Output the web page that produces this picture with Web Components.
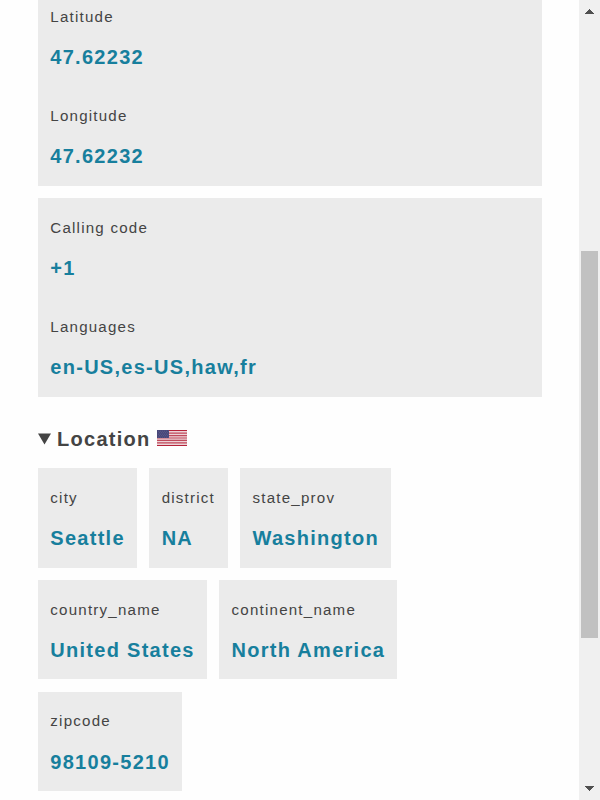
<!DOCTYPE html>
<html lang="en">
<head>
<meta charset="utf-8">
<title>Location details</title>
<style>
html, body { margin: 0; height: 100%; overflow: hidden; background: #fefefe; }
body { font-family: "Liberation Sans", Arial, sans-serif; color: #444; letter-spacing: 1.28px; }
</style>
</head>
<body>
<geo-page></geo-page>
<script>
function define(name, html) {
  const template = document.createElement('template');
  template.innerHTML = html;
  customElements.define(name, class extends HTMLElement {
    constructor() {
      super();
      this.attachShadow({ mode: 'open' }).append(template.content.cloneNode(true));
    }
  });
}

define('geo-field', `
<style>
:host { display: block; box-sizing: border-box; height: 99.2px; min-width: 78.5px; padding: 17.65px 12.1px 0 12.3px; white-space: nowrap; }
.label { font-size: 15.1px; line-height: 24px; letter-spacing: 1.22px; }
.value { font-size: 20px; font-weight: 700; line-height: 32px; color: #177f9d; margin-top: 12.35px; }
</style>
<div class="label"><slot name="label"></slot></div>
<div class="value"><slot></slot></div>`);

define('geo-card', `
<style>:host { display: block; background: #ebebeb; }</style>
<slot></slot>`);

define('us-flag', `
<style>:host { display: block; width: 30px; height: 16px; } svg { display: block; }</style>
<svg width="30" height="16" viewBox="0 0 30 16">
  <path fill="#ecd3d7" d="M0 0h30v16H0z"/>
  <path stroke="#c04a5c" stroke-width="1.23" d="M0 3.077h30M0 5.538h30M0 8h30M0 10.46h30M0 12.92h30"/>
  <path fill="#b5233a" d="M0 0h30v1.1H0zM0 14.9h30V16H0z"/>
  <path fill="#484779" d="M0 0h12v8H0z"/>
  <path stroke="#8483ab" stroke-width=".55" stroke-dasharray=".65 1.35" d="M1 1.2h10.5M2 2.7h9.5M1 4.2h10.5M2 5.7h9.5M1 7.2h10.5"/>
</svg>`);

define('geo-heading', `
<style>
:host { display: flex; align-items: center; height: 32px; font-size: 20px; font-weight: 700; }
.marker { width: 13px; height: 12px; margin-right: 6px; display: block; }
.flag { margin: -3px 0 0 6.6px; }
</style>
<svg class="marker" viewBox="0 0 13 12"><path fill="#444" d="M0 .5h13L6.5 11.5z"/></svg>
<span><slot></slot></span><us-flag class="flag"></us-flag>`);

define('geo-scrollbar', `
<style>
:host { display: flex; flex-direction: column; align-items: center; box-sizing: border-box; width: 21px; height: 800px; background: #f0f0f0; }
svg { display: block; width: 21px; height: 24px; flex: none; }
.track { flex: 1; padding-top: 227px; box-sizing: border-box; }
.thumb { width: 17px; height: 387px; background: #c1c1c1; }
</style>
<svg viewBox="0 0 21 24" shape-rendering="crispEdges"><path fill="#505050" d="M6 14v-1h1v-1h1v-1h1v-1h1V9h1v1h1v1h1v1h1v1h1v1z"/></svg>
<div class="track"><div class="thumb"></div></div>
<svg viewBox="0 0 21 24" shape-rendering="crispEdges"><path fill="#505050" d="M6 10v1h1v1h1v1h1v1h1v1h1v-1h1v-1h1v-1h1v-1h1v-1z"/></svg>`);

define('geo-page', `
<style>
:host { display: grid; grid-template-columns: 1fr 21px; height: 800px; overflow: hidden; }
main { padding: 0 37px 0 38px; min-width: 0; margin-top: -12.8px; }
.wide + .wide { margin-top: 12.6px; }
geo-heading { margin: 26.6px 0 13.2px; }
.cards { display: flex; flex-wrap: wrap; gap: 12.54px 12.4px; width: 400px; }
</style>
<main>
  <geo-card class="wide">
    <geo-field><span slot="label">Latitude</span>47.62232</geo-field>
    <geo-field><span slot="label">Longitude</span>47.62232</geo-field>
  </geo-card>
  <geo-card class="wide">
    <geo-field><span slot="label">Calling code</span>+1</geo-field>
    <geo-field><span slot="label">Languages</span>en-US,es-US,haw,fr</geo-field>
  </geo-card>
  <geo-heading>Location</geo-heading>
  <div class="cards">
    <geo-card><geo-field><span slot="label">city</span>Seattle</geo-field></geo-card>
    <geo-card><geo-field><span slot="label">district</span>NA</geo-field></geo-card>
    <geo-card><geo-field><span slot="label">state_prov</span>Washington</geo-field></geo-card>
    <geo-card><geo-field><span slot="label">country_name</span>United States</geo-field></geo-card>
    <geo-card><geo-field><span slot="label">continent_name</span>North America</geo-field></geo-card>
    <geo-card><geo-field><span slot="label">zipcode</span>98109-5210</geo-field></geo-card>
  </div>
</main>
<geo-scrollbar></geo-scrollbar>`);
</script>
</body>
</html>
